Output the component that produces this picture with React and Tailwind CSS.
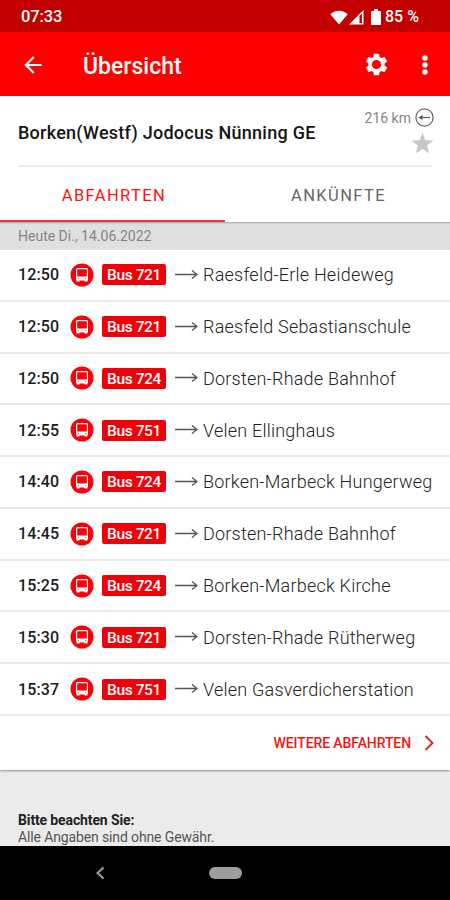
const departures = [
  { time: '12:50', line: 'Bus 721', to: 'Raesfeld-Erle Heideweg' },
  { time: '12:50', line: 'Bus 721', to: 'Raesfeld Sebastianschule' },
  { time: '12:50', line: 'Bus 724', to: 'Dorsten-Rhade Bahnhof' },
  { time: '12:55', line: 'Bus 751', to: 'Velen Ellinghaus' },
  { time: '14:40', line: 'Bus 724', to: 'Borken-Marbeck Hungerweg' },
  { time: '14:45', line: 'Bus 721', to: 'Dorsten-Rhade Bahnhof' },
  { time: '15:25', line: 'Bus 724', to: 'Borken-Marbeck Kirche' },
  { time: '15:30', line: 'Bus 721', to: 'Dorsten-Rhade Rütherweg' },
  { time: '15:37', line: 'Bus 751', to: 'Velen Gasverdicherstation' },
]

function StatusBar() {
  return (
    <div className="h-8 shrink-0 bg-[#c20000] text-white flex items-center pt-[2px] pl-[21px] pr-[29px]">
      <span className="text-[16.500px] leading-none font-medium tracking-[-0.1px]">07:33</span>
      <svg className="ml-auto" width="18" height="15" viewBox="0 0 18 15" fill="currentColor">
        <path d="M0.3 4.2C2.6 2 5.600 0.8 9 0.8s6.400 1.200 8.700 3.400L9 14.500z" />
      </svg>
      <svg className="ml-px" width="15" height="15" viewBox="0 0 15 15">
        <path d="M0 14.500L14.500 0v14.500z" fill="currentColor" />
        <path d="M10.500 6v7h2.500V3.500z" fill="#c20000" />
      </svg>
      <svg className="ml-[7px]" width="10" height="16" viewBox="0 0 10 16" fill="currentColor">
        <path d="M3 0h4v2h2a1 1 0 0 1 1 1v12a1 1 0 0 1-1 1H1a1 1 0 0 1-1-1V3a1 1 0 0 1 1-1h2z" />
      </svg>
      <span className="ml-[4px] w-[36px] text-[16px] leading-none font-medium whitespace-nowrap">85 %</span>
    </div>
  )
}

function AppBar() {
  return (
    <div className="h-16 shrink-0 bg-[#ff0000] text-white flex items-center pt-px pl-[20px] pr-[12px]">
      <svg width="26" height="26" viewBox="0 0 24 24" fill="currentColor">
        <path d="M20 11H7.830l5.590-5.590L12 4l-8 8 8 8 1.410-1.410L7.830 13H20z" />
      </svg>
      <h1 className="ml-[37px] pt-[4px] text-[23px] leading-none font-medium">Übersicht</h1>
      <svg className="ml-auto" width="27" height="27" viewBox="0 0 24 24" fill="currentColor">
        <path d="M19.140 12.940c.04-.3.06-.61.06-.94 0-.32-.02-.64-.07-.94l2.030-1.580c.18-.14.23-.41.12-.61l-1.920-3.320c-.12-.22-.37-.29-.59-.22l-2.390.96c-.5-.38-1.030-.7-1.620-.94l-.36-2.540c-.04-.24-.24-.41-.48-.41h-3.840c-.24 0-.43.17-.47.41l-.36 2.540c-.59.24-1.130.57-1.620.94l-2.390-.96c-.22-.08-.47 0-.59.22L2.740 8.870c-.12.21-.08.47.12.61l2.030 1.580c-.05.3-.09.63-.09.94s.02.64.07.94l-2.030 1.580c-.18.14-.23.41-.12.61l1.920 3.320c.12.22.37.29.59.22l2.390-.96c.5.38 1.030.7 1.620.94l.36 2.540c.05.24.24.41.48.41h3.840c.24 0 .44-.17.47-.41l.36-2.540c.59-.24 1.130-.56 1.620-.94l2.390.96c.22.08.47 0 .59-.22l1.920-3.320c.12-.22.07-.47-.12-.61zM12 16.100a4.100 4.100 0 1 1 0-8.200 4.100 4.100 0 0 1 0 8.200z" />
      </svg>
      <svg className="ml-[22px]" width="26" height="26" viewBox="0 0 26 26" fill="currentColor">
        <circle cx="13" cy="6" r="2.700" />
        <circle cx="13" cy="13" r="2.700" />
        <circle cx="13" cy="20" r="2.700" />
      </svg>
    </div>
  )
}

function StationHeader() {
  return (
    <div className="h-[71px] shrink-0 mx-[18px] border-b-2 border-[#eeeeee] flex justify-between">
      <h2 className="pt-[27px] text-[18px] leading-5 font-medium tracking-[0.26px] text-[#151515] whitespace-nowrap">
        Borken(Westf) Jodocus Nünning GE
      </h2>
      <div className="pt-[12px] -mr-[2px] flex flex-col items-end">
        <div className="flex items-center gap-[4px] text-[#858585]">
          <span className="text-[14px] leading-5 whitespace-nowrap">216 km</span>
          <svg width="19" height="20" viewBox="0 0 19 20" fill="none" stroke="#666666">
            <circle cx="9.500" cy="9.500" r="8.600" strokeWidth="1.200" />
            <path d="M5 9.500h10" strokeWidth="1.300" />
            <path d="M3.500 9.500l4-2.500v5z" fill="#555555" stroke="none" />
          </svg>
        </div>
        <svg className="mt-[4px]" width="23" height="22" viewBox="0 0 23 22" fill="#c6c6c6">
          <path d="M11.500 0.500l2.700 7.700 8.300.2-6.600 5 2.400 8-6.800-4.700-6.800 4.700 2.400-8-6.600-5 8.300-.2z" />
        </svg>
      </div>
    </div>
  )
}

function Tabs() {
  return (
    <div className="h-[55px] shrink-0 grid grid-cols-2 text-center text-[16.500px] leading-[57px] tracking-[1.400px]">
      <div className="h-[55px] pl-[3px] border-b-2 border-[#f33333] text-[#ff1010]">ABFAHRTEN</div>
      <div className="h-[55px] pl-[2px] text-[#666666]">ANKÜNFTE</div>
    </div>
  )
}

function BusIcon() {
  return (
    <svg className="shrink-0" width="24" height="24" viewBox="0 0 24 24">
      <circle cx="12" cy="12" r="11.500" fill="#fa000a" />
      <rect x="6" y="5" width="12" height="12.500" rx="1.500" fill="#ffffff" />
      <rect x="7.200" y="6.200" width="9.600" height="7.300" rx="0.500" fill="#fa000a" />
      <circle cx="8.500" cy="15.500" r="0.500" fill="#fa000a" />
      <circle cx="15.500" cy="15.500" r="0.500" fill="#fa000a" />
      <path d="M6.500 17h3v1.500h-3zM14.500 17h3v1.500h-3z" fill="#ffffff" />
    </svg>
  )
}

function DepartureRow({ time, line, to }) {
  return (
    <li className="flex items-center pl-[18px] border-b-2 border-[#e8e8e8] whitespace-nowrap">
      <span className="w-[52px] pt-px text-[16px] font-medium tracking-[0.1px] text-[#1c1c1c]">{time}</span>
      <BusIcon />
      <span className="ml-[8px] w-[64px] h-[21px] rounded-[2px] bg-[#f20008] text-white text-center text-[15.500px] leading-[22px] font-medium tracking-[-0.4px]">
        {line}
      </span>
      <svg className="ml-[9px] shrink-0" width="23" height="12" viewBox="0 0 23 12" fill="none" stroke="#555555" strokeWidth="1.400">
        <path d="M0 5.500h22M17 1.500l5 4-5 4" />
      </svg>
      <span className="ml-[5px] text-[18px] font-light tracking-[0.22px] text-[#222222]">{to}</span>
    </li>
  )
}

export default function App() {
  return (
    <div className="w-[450px] h-[900px] flex flex-col overflow-hidden bg-[#ebebeb] font-['Roboto',sans-serif]">
      <StatusBar />
      <AppBar />
      <div className="shrink-0 flex flex-col bg-white shadow-[0_1px_2px_rgba(0,0,0,0.4)]">
        <StationHeader />
        <Tabs />
        <div className="h-[28px] bg-[#e0e0e0] pl-[18px] text-[14px] leading-[29px] text-[#858585] shadow-[inset_0_2px_2px_-1px_rgba(0,0,0,0.25)]">
          Heute Di., 14.06.2022
        </div>
        <ul className="h-[466px] grid grid-rows-9">
          {departures.map((d, i) => (
            <DepartureRow key={i} {...d} />
          ))}
        </ul>
        <div className="h-[54px] flex items-center justify-end pr-[16px] text-[#f51515]">
          <span className="text-[14px] font-medium tracking-[-0.1px]">WEITERE ABFAHRTEN</span>
          <svg className="ml-[13px]" width="10" height="16" viewBox="0 0 10 16" fill="none" stroke="currentColor" strokeWidth="1.800">
            <path d="M1.500 1l7 7-7 7" />
          </svg>
        </div>
      </div>

      {/* Hinweis */}
      <div className="grow pt-[42px] pl-[18px] text-[14px] leading-[17px] tracking-[-0.13px] text-[#555555]">
        <p className="font-bold text-[#222222]">Bitte beachten Sie:</p>
        <p>Alle Angaben sind ohne Gewähr.</p>
      </div>

      {/* Android-Navigation */}
      <div className="h-[54px] shrink-0 bg-black flex items-center pl-[95px]">
        <svg width="10" height="14" viewBox="0 0 10 14" fill="none" stroke="#a0a0a0" strokeWidth="2">
          <path d="M8.500 1.500L2.500 7l6 5.500" />
        </svg>
        <div className="ml-[104px] w-[33px] h-3 rounded-full bg-[#9e9e9e]" />
      </div>
    </div>
  )
}
